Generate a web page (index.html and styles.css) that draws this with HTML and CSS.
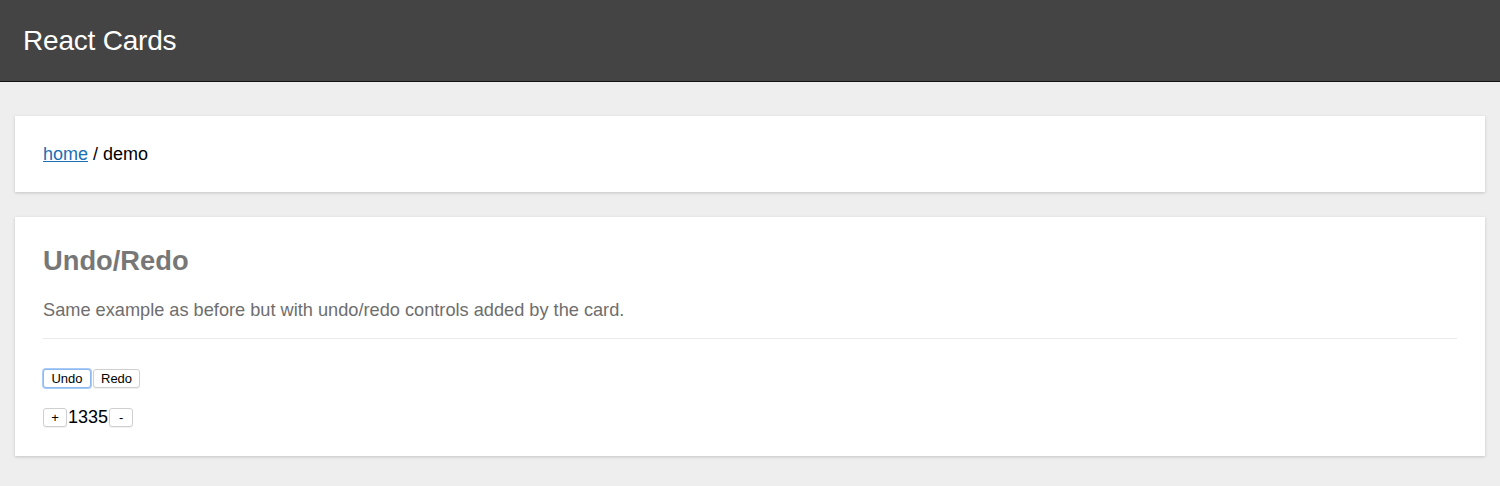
FILE: index.html
```html
<!DOCTYPE html>
<html>
<head>
<meta charset="utf-8">
<link rel="stylesheet" href="styles.css">
</head>
<body>
<header class="topbar"><h1 class="brand">React Cards</h1></header>
<main class="content">
  <section class="card">
    <div class="crumbs"><a href="#" class="crumb-link">home</a> / demo</div>
  </section>
  <section class="card">
    <h2 class="card-title">Undo/Redo</h2>
    <p class="card-desc">Same example as before but with undo/redo controls added by the card.</p>
    <hr class="divider">
    <div class="history"><button class="btn btn-focus">Undo</button><button class="btn">Redo</button></div>
    <div class="counter"><button class="btn btn-sq">+</button><span class="count">1335</span><button class="btn btn-sq">-</button></div>
  </section>
</main>
</body>
</html>
```
FILE: styles.css
```css
html, body { margin: 0; padding: 0; }
body {
  background: #eeeeee;
  font-family: "Liberation Sans", Arial, sans-serif;
  color: #000;
  height: 486px;
  overflow: hidden;
}
.topbar {
  background: #444444;
  height: 81px;
  border-bottom: 1px solid #111;
  display: flex;
  align-items: center;
  padding: 0 23px;
}
.brand {
  margin: 0;
  color: #fff;
  font-weight: normal;
  font-size: 28px;
  letter-spacing: -0.2px;
}
.content {
  padding: 34px 15px 0;
  display: flex;
  flex-direction: column;
  gap: 25px;
}
.card {
  background: #fff;
  padding: 28px 28px;
  box-shadow: 0 1px 3px rgba(0,0,0,0.18);
}
.crumbs { font-size: 18px; line-height: 20px; }
.crumb-link { color: #1a6fb5; text-decoration: underline; }
.card-title {
  margin: 0;
  font-size: 27.3px;
  font-weight: bold;
  color: #777;
  line-height: 32px;
}
.card-desc {
  margin: 22px 0 0;
  font-size: 18.2px;
  line-height: 22px;
  color: #6e6e6e;
}
.divider {
  border: 0;
  border-top: 1px solid #eaeaea;
  margin: 17px 0 0;
}
.history { margin-top: 30px; display: flex; gap: 2px; }
.btn {
  font-family: "Liberation Sans", Arial, sans-serif;
  font-size: 13px;
  height: 19px;
  padding: 0 7px;
  background: #fff;
  border: 1px solid #cfcfcf;
  border-radius: 3px;
  color: #000;
  line-height: 17px;
  box-shadow: 0 1px 1px rgba(0,0,0,0.06);
}
.btn-focus {
  border-color: #8fb8f0;
  box-shadow: 0 0 0 1px #a9cbf7;
  width: 48px;
}
.counter { margin-top: 20px; display: flex; align-items: center; margin-bottom: 1px; }
.btn-sq { width: 24px; padding: 0; }
.count { font-size: 18px; line-height: 19px; padding: 0 1px; }
```
